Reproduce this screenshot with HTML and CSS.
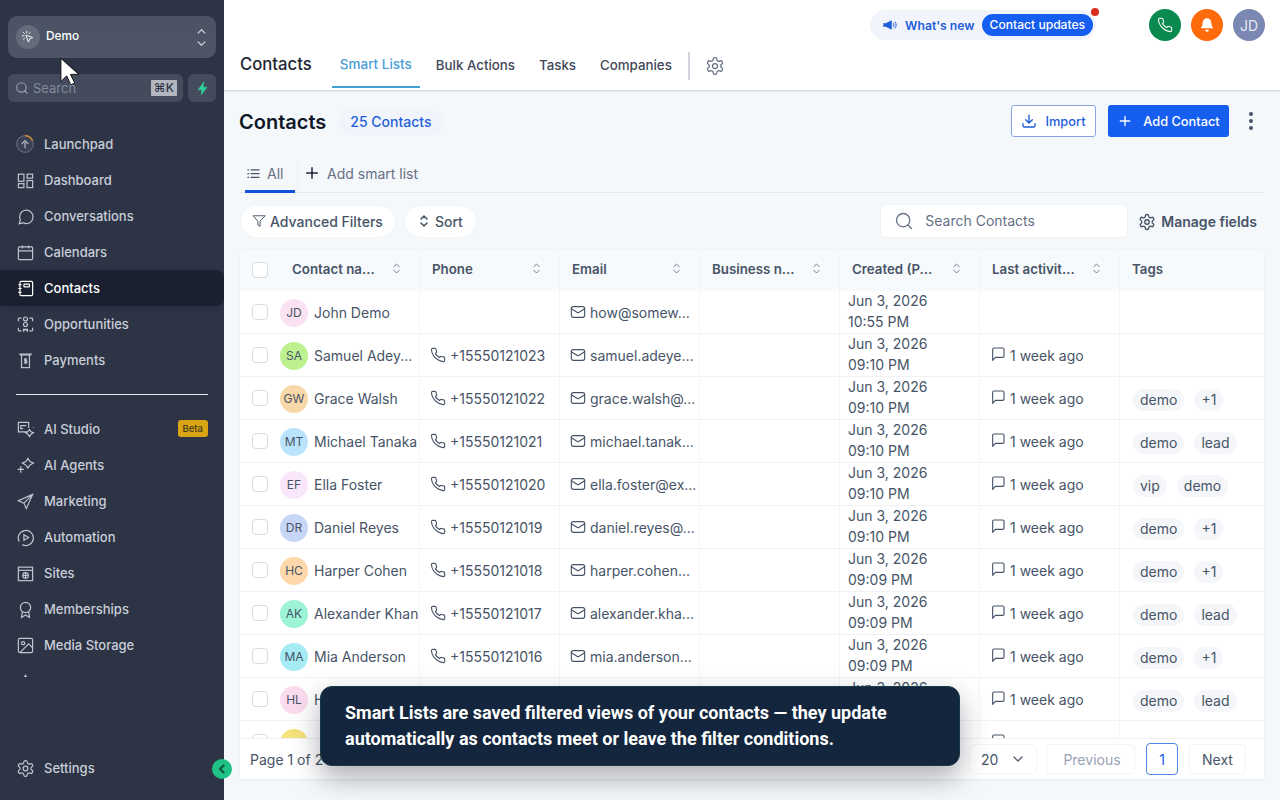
FILE: index.html
```html
<!DOCTYPE html>
<html lang="en">
<head>
<meta charset="utf-8">
<title>Contacts</title>
<link rel="stylesheet" href="styles.css">
</head>
<body>
<svg class="sprite" aria-hidden="true">
  <symbol id="i-phone" viewBox="0 0 24 24"><path d="M22 16.92v3a2 2 0 0 1-2.18 2 19.79 19.79 0 0 1-8.63-3.07 19.5 19.5 0 0 1-6-6 19.79 19.79 0 0 1-3.07-8.67A2 2 0 0 1 4.11 2h3a2 2 0 0 1 2 1.72 12.84 12.84 0 0 0 .7 2.81 2 2 0 0 1-.45 2.11L8.09 9.91a16 16 0 0 0 6 6l1.27-1.27a2 2 0 0 1 2.11-.45 12.84 12.84 0 0 0 2.81.7A2 2 0 0 1 22 16.92z"/></symbol>
  <symbol id="i-mail" viewBox="0 0 24 24"><rect x="2" y="4" width="20" height="16" rx="3"/><path d="m22 7-8.97 5.7a1.94 1.94 0 0 1-2.06 0L2 7"/></symbol>
  <symbol id="i-msg" viewBox="0 0 24 24"><path d="M21 15a2 2 0 0 1-2 2H8l-4 4.5V5a2 2 0 0 1 2-2h13a2 2 0 0 1 2 2z"/></symbol>
  <symbol id="i-gear" viewBox="0 0 24 24"><path d="M12.22 2h-.44a2 2 0 0 0-2 2v.18a2 2 0 0 1-1 1.73l-.43.25a2 2 0 0 1-2 0l-.15-.08a2 2 0 0 0-2.73.73l-.22.38a2 2 0 0 0 .73 2.73l.15.1a2 2 0 0 1 1 1.72v.51a2 2 0 0 1-1 1.74l-.15.09a2 2 0 0 0-.73 2.73l.22.38a2 2 0 0 0 2.73.73l.15-.08a2 2 0 0 1 2 0l.43.25a2 2 0 0 1 1 1.73V20a2 2 0 0 0 2 2h.44a2 2 0 0 0 2-2v-.18a2 2 0 0 1 1-1.73l.43-.25a2 2 0 0 1 2 0l.15.08a2 2 0 0 0 2.73-.73l.22-.39a2 2 0 0 0-.73-2.73l-.15-.08a2 2 0 0 1-1-1.74v-.5a2 2 0 0 1 1-1.74l.15-.09a2 2 0 0 0 .73-2.73l-.22-.38a2 2 0 0 0-2.73-.73l-.15.08a2 2 0 0 1-2 0l-.43-.25a2 2 0 0 1-1-1.73V4a2 2 0 0 0-2-2z"/><circle cx="12" cy="12" r="3"/></symbol>
  <symbol id="i-sort" viewBox="0 0 10 14"><path d="M2 5l3-3 3 3M2 9l3 3 3-3"/></symbol>
  <symbol id="i-search" viewBox="0 0 24 24"><circle cx="11" cy="11" r="8"/><path d="m21 21-4.3-4.3"/></symbol>
</svg>

<div class="app">
  <aside class="sidebar">
    <div class="switcher">
      <span class="sw-logo"><svg class="ico-14" viewBox="0 0 24 24"><path d="M9 9l11 4-5 2-2 5z"/><path d="M4 4l2 2M10 2v3M2 10h3M4 16l2-2M16 4l-2 2"/></svg></span>
      <span class="sw-name">Demo</span>
      <svg class="sw-caret" viewBox="0 0 12 22"><path d="M2 6l4-4 4 4M2 16l4 4 4-4"/></svg>
    </div>
    <div class="search-row">
      <div class="side-search">
        <svg class="ico-side-search"><use href="#i-search"/></svg>
        <span class="side-search-text">Search</span>
        <kbd class="kbd">⌘K</kbd>
      </div>
      <button class="bolt" type="button"><svg viewBox="0 0 24 24" class="bolt-ico"><path d="M14 2 5 14h6l-1 8 9-12h-6z"/></svg></button>
    </div>
    <nav class="side-nav">
      <a class="nav-item"><svg class="nav-ico launch" viewBox="0 0 24 24"><circle cx="12" cy="12" r="10"/><path class="launch-arc" d="M12 2a10 10 0 0 1 9 6"/><path d="M12 17v-7M8 12l4-4 4 4"/></svg><span class="lbl">Launchpad</span></a>
      <a class="nav-item"><svg class="nav-ico" viewBox="0 0 24 24"><rect x="3" y="4" width="7" height="9"/><rect x="14" y="4" width="7" height="5"/><rect x="3" y="16" width="7" height="5"/><rect x="14" y="12" width="7" height="9"/></svg><span class="lbl">Dashboard</span></a>
      <a class="nav-item"><svg class="nav-ico" viewBox="0 0 24 24"><path d="M4 21l1.5-4.5A8.5 8.5 0 1 1 9 20z"/></svg><span class="lbl">Conversations</span></a>
      <a class="nav-item"><svg class="nav-ico" viewBox="0 0 24 24"><rect x="3" y="5" width="18" height="16" rx="1.5"/><path d="M3 10h18M8 3v4M16 3v4"/></svg><span class="lbl">Calendars</span></a>
      <a class="nav-item active"><svg class="nav-ico" viewBox="0 0 24 24"><rect x="5" y="3" width="16" height="18" rx="1.5"/><rect x="10" y="6.5" width="7" height="3.5" rx=".8"/><path d="M3 7h4M3 12h4M3 17h4"/></svg><span class="lbl">Contacts</span></a>
      <a class="nav-item"><svg class="nav-ico" viewBox="0 0 24 24"><circle cx="12" cy="5" r="2.5"/><circle cx="12" cy="12" r="2.5"/><path d="M9.500 21a2.500 2.500 0 0 1 5 0v-3h-5zM3 4h4M3 4v4M21 4h-4M21 4v4M3 20h4M3 20v-4M21 20h-4M21 20v-4"/></svg><span class="lbl">Opportunities</span></a>
      <a class="nav-item"><svg class="nav-ico" viewBox="0 0 24 24"><path d="M4 4h16M6 4v2M18 4v2"/><rect x="7" y="5" width="10" height="16"/><path d="M14 10h-3v2.500h2.500V15H10M12 9v7"/></svg><span class="lbl">Payments</span></a>
      <hr class="side-divider">
      <a class="nav-item"><svg class="nav-ico" viewBox="0 0 24 24"><path d="M14 15H3V3h13v7M6 7h7M6 7v4h3"/><path d="M17 12l2 3 3 1-3 2-2 3-2-3-3-2 3-1zM22 9v1"/></svg><span class="lbl">AI Studio</span><span class="beta">Beta</span></a>
      <a class="nav-item"><svg class="nav-ico" viewBox="0 0 24 24"><path d="M15 3l2.500 4 4.500 2-4.500 2.500L15 15l-2.500-3.500L8 9l4.500-2zM6 13v8M2 17h8"/></svg><span class="lbl">AI Agents</span></a>
      <a class="nav-item"><svg class="nav-ico" viewBox="0 0 24 24"><path d="M21 3 3 11l7 3 3 7zM10 14l11-11"/></svg><span class="lbl">Marketing</span></a>
      <a class="nav-item"><svg class="nav-ico" viewBox="0 0 24 24"><path d="M4 17a9.500 9.500 0 1 1 4 4M3 12a9 9 0 0 0 1 5"/><path d="M10 8.500v7l6-3.500z"/></svg><span class="lbl">Automation</span></a>
      <a class="nav-item"><svg class="nav-ico" viewBox="0 0 24 24"><rect x="3" y="4" width="18" height="17"/><path d="M3 8h18"/><circle cx="12" cy="14.500" r="3.500"/><path d="M8.500 14.500h7M12 11v7"/></svg><span class="lbl">Sites</span></a>
      <a class="nav-item"><svg class="nav-ico" viewBox="0 0 24 24"><circle cx="12" cy="9.500" r="6.500"/><path d="M8 15l-1 7 5-3 5 3-1-7"/></svg><span class="lbl">Memberships</span></a>
      <a class="nav-item"><svg class="nav-ico" viewBox="0 0 24 24"><rect x="3" y="3" width="18" height="18" rx="2"/><circle cx="9" cy="9" r="2"/><path d="m21 15-5-5L5 21"/></svg><span class="lbl">Media Storage</span></a>
      <a class="nav-item"><svg class="nav-ico" viewBox="0 0 24 24"><path class="tri" d="M12 2.500l2 4h-4z"/></svg></a>
    </nav>
    <div class="side-foot">
      <a class="nav-item"><svg class="nav-ico"><use href="#i-gear"/></svg><span class="lbl">Settings</span></a>
      <button class="collapse" type="button"><svg viewBox="0 0 12 12" class="collapse-ico"><path d="M7.500 2.500 4 6l3.500 3.500"/></svg></button>
    </div>
  </aside>

  <main class="main">
    <header class="topbar">
      <div class="top-row">
        <div class="news">
          <svg class="news-ico" viewBox="0 0 20 16"><path d="M1 6h3l8-4v12l-8-4H1z"/><path class="news-wave" d="M14.500 5.500a3 3 0 0 1 0 5M17 3.500a6 6 0 0 1 0 9"/></svg>
          <span class="news-label">What's new</span>
          <span class="news-pill">Contact updates</span>
          <span class="news-dot"></span>
        </div>
        <div class="top-icons">
          <span class="round green"><svg class="ico-16"><use href="#i-phone"/></svg></span>
          <span class="round orange"><svg class="bell" viewBox="0 0 24 24"><path d="M12 2a6.500 6.500 0 0 0-6.500 6.500c0 5-2.500 7-2.500 8.500h18c0-1.500-2.500-3.500-2.500-8.500A6.500 6.500 0 0 0 12 2z"/><path d="M9 19h6a3 3 0 0 1-6 0z"/></svg></span>
          <span class="round slate">JD</span>
        </div>
      </div>
      <div class="tab-row">
        <span class="brand">Contacts</span>
        <a class="top-tab current">Smart Lists</a>
        <a class="top-tab">Bulk Actions</a>
        <a class="top-tab">Tasks</a>
        <a class="top-tab">Companies</a>
        <span class="tab-sep"></span>
        <svg class="tab-gear"><use href="#i-gear"/></svg>
      </div>
    </header>

    <section class="content">
      <div class="title-row">
        <h1 class="title">Contacts</h1>
        <span class="count">25 Contacts</span>
        <span class="spacer"></span>
        <button class="btn outline" type="button"><svg class="ico-16" viewBox="0 0 24 24"><path d="M12 3v12M7 10l5 5 5-5M3 16v3a2 2 0 0 0 2 2h14a2 2 0 0 0 2-2v-3"/></svg>Import</button>
        <button class="btn solid" type="button"><svg class="ico-16" viewBox="0 0 24 24"><path d="M12 5v14M5 12h14"/></svg>Add Contact</button>
        <span class="dots"><i></i><i></i><i></i></span>
      </div>

      <div class="list-tabs">
        <a class="list-tab on"><svg class="ico-16" viewBox="0 0 24 24"><path d="M8 6h13M8 12h13M8 18h13M3 6h1M3 12h1M3 18h1"/></svg>All</a>
        <a class="list-tab add"><svg class="plus" viewBox="0 0 24 24"><path d="M12 5v14M5 12h14"/></svg>Add smart list</a>
      </div>

      <div class="filter-row">
        <button class="pill" type="button"><svg class="ico-14" viewBox="0 0 24 24"><path d="M22 3H2l8 9.500V19l4 2v-8.500z"/></svg>Advanced Filters</button>
        <button class="pill sort-pill" type="button"><svg class="ico-sort-pill"><use href="#i-sort"/></svg>Sort</button>
        <span class="spacer"></span>
        <div class="search"><svg class="ico-20"><use href="#i-search"/></svg><span>Search Contacts</span></div>
        <a class="manage"><svg class="ico-18"><use href="#i-gear"/></svg>Manage fields</a>
      </div>

      <div class="table">
        <div class="row head">
          <div class="cell check"><span class="box"></span></div>
          <div class="cell name-h">Contact na...<svg class="sort"><use href="#i-sort"/></svg></div>
          <div class="cell">Phone<svg class="sort"><use href="#i-sort"/></svg></div>
          <div class="cell">Email<svg class="sort"><use href="#i-sort"/></svg></div>
          <div class="cell">Business n...<svg class="sort"><use href="#i-sort"/></svg></div>
          <div class="cell">Created (P...<svg class="sort"><use href="#i-sort"/></svg></div>
          <div class="cell">Last activit...<svg class="sort"><use href="#i-sort"/></svg></div>
          <div class="cell">Tags</div>
        </div>
        <div class="body">
          <div class="row">
            <div class="cell check"><span class="box"></span></div>
            <div class="cell who"><span class="av pink">JD</span><span class="nm">John Demo</span></div>
            <div class="cell"></div>
            <div class="cell mail"><svg class="ci"><use href="#i-mail"/></svg>how@somew...</div>
            <div class="cell"></div>
            <div class="cell date">Jun 3, 2026<br>10:55 PM</div>
            <div class="cell"></div>
            <div class="cell"></div>
          </div>
          <div class="row">
            <div class="cell check"><span class="box"></span></div>
            <div class="cell who"><span class="av lime">SA</span><span class="nm">Samuel Adey...</span></div>
            <div class="cell tel"><svg class="ci"><use href="#i-phone"/></svg>+15550121023</div>
            <div class="cell mail"><svg class="ci"><use href="#i-mail"/></svg>samuel.adeye...</div>
            <div class="cell"></div>
            <div class="cell date">Jun 3, 2026<br>09:10 PM</div>
            <div class="cell act"><svg class="ci"><use href="#i-msg"/></svg>1 week ago</div>
            <div class="cell"></div>
          </div>
          <div class="row">
            <div class="cell check"><span class="box"></span></div>
            <div class="cell who"><span class="av sand">GW</span><span class="nm">Grace Walsh</span></div>
            <div class="cell tel"><svg class="ci"><use href="#i-phone"/></svg>+15550121022</div>
            <div class="cell mail"><svg class="ci"><use href="#i-mail"/></svg>grace.walsh@...</div>
            <div class="cell"></div>
            <div class="cell date">Jun 3, 2026<br>09:10 PM</div>
            <div class="cell act"><svg class="ci"><use href="#i-msg"/></svg>1 week ago</div>
            <div class="cell tags"><span class="tag">demo</span><span class="tag">+1</span></div>
          </div>
          <div class="row">
            <div class="cell check"><span class="box"></span></div>
            <div class="cell who"><span class="av sky">MT</span><span class="nm">Michael Tanaka</span></div>
            <div class="cell tel"><svg class="ci"><use href="#i-phone"/></svg>+15550121021</div>
            <div class="cell mail"><svg class="ci"><use href="#i-mail"/></svg>michael.tanak...</div>
            <div class="cell"></div>
            <div class="cell date">Jun 3, 2026<br>09:10 PM</div>
            <div class="cell act"><svg class="ci"><use href="#i-msg"/></svg>1 week ago</div>
            <div class="cell tags"><span class="tag">demo</span><span class="tag">lead</span></div>
          </div>
          <div class="row">
            <div class="cell check"><span class="box"></span></div>
            <div class="cell who"><span class="av lilac">EF</span><span class="nm">Ella Foster</span></div>
            <div class="cell tel"><svg class="ci"><use href="#i-phone"/></svg>+15550121020</div>
            <div class="cell mail"><svg class="ci"><use href="#i-mail"/></svg>ella.foster@ex...</div>
            <div class="cell"></div>
            <div class="cell date">Jun 3, 2026<br>09:10 PM</div>
            <div class="cell act"><svg class="ci"><use href="#i-msg"/></svg>1 week ago</div>
            <div class="cell tags"><span class="tag">vip</span><span class="tag">demo</span></div>
          </div>
          <div class="row">
            <div class="cell check"><span class="box"></span></div>
            <div class="cell who"><span class="av indigo">DR</span><span class="nm">Daniel Reyes</span></div>
            <div class="cell tel"><svg class="ci"><use href="#i-phone"/></svg>+15550121019</div>
            <div class="cell mail"><svg class="ci"><use href="#i-mail"/></svg>daniel.reyes@...</div>
            <div class="cell"></div>
            <div class="cell date">Jun 3, 2026<br>09:10 PM</div>
            <div class="cell act"><svg class="ci"><use href="#i-msg"/></svg>1 week ago</div>
            <div class="cell tags"><span class="tag">demo</span><span class="tag">+1</span></div>
          </div>
          <div class="row">
            <div class="cell check"><span class="box"></span></div>
            <div class="cell who"><span class="av peach">HC</span><span class="nm">Harper Cohen</span></div>
            <div class="cell tel"><svg class="ci"><use href="#i-phone"/></svg>+15550121018</div>
            <div class="cell mail"><svg class="ci"><use href="#i-mail"/></svg>harper.cohen...</div>
            <div class="cell"></div>
            <div class="cell date">Jun 3, 2026<br>09:09 PM</div>
            <div class="cell act"><svg class="ci"><use href="#i-msg"/></svg>1 week ago</div>
            <div class="cell tags"><span class="tag">demo</span><span class="tag">+1</span></div>
          </div>
          <div class="row">
            <div class="cell check"><span class="box"></span></div>
            <div class="cell who"><span class="av mint">AK</span><span class="nm">Alexander Khan</span></div>
            <div class="cell tel"><svg class="ci"><use href="#i-phone"/></svg>+15550121017</div>
            <div class="cell mail"><svg class="ci"><use href="#i-mail"/></svg>alexander.kha...</div>
            <div class="cell"></div>
            <div class="cell date">Jun 3, 2026<br>09:09 PM</div>
            <div class="cell act"><svg class="ci"><use href="#i-msg"/></svg>1 week ago</div>
            <div class="cell tags"><span class="tag">demo</span><span class="tag">lead</span></div>
          </div>
          <div class="row">
            <div class="cell check"><span class="box"></span></div>
            <div class="cell who"><span class="av aqua">MA</span><span class="nm">Mia Anderson</span></div>
            <div class="cell tel"><svg class="ci"><use href="#i-phone"/></svg>+15550121016</div>
            <div class="cell mail"><svg class="ci"><use href="#i-mail"/></svg>mia.anderson...</div>
            <div class="cell"></div>
            <div class="cell date">Jun 3, 2026<br>09:09 PM</div>
            <div class="cell act"><svg class="ci"><use href="#i-msg"/></svg>1 week ago</div>
            <div class="cell tags"><span class="tag">demo</span><span class="tag">+1</span></div>
          </div>
          <div class="row">
            <div class="cell check"><span class="box"></span></div>
            <div class="cell who"><span class="av rose">HL</span><span class="nm">H</span></div>
            <div class="cell tel"></div>
            <div class="cell mail"></div>
            <div class="cell"></div>
            <div class="cell date">Jun 3, 2026<br>09:09 PM</div>
            <div class="cell act"><svg class="ci"><use href="#i-msg"/></svg>1 week ago</div>
            <div class="cell tags"><span class="tag">demo</span><span class="tag">lead</span></div>
          </div>
          <div class="row">
            <div class="cell check"><span class="box"></span></div>
            <div class="cell who"><span class="av yellow"></span></div>
            <div class="cell"></div>
            <div class="cell"></div>
            <div class="cell"></div>
            <div class="cell"></div>
            <div class="cell act"><svg class="ci"><use href="#i-msg"/></svg></div>
            <div class="cell"></div>
          </div>
        </div>
        <div class="pager">
          <span class="page-text">Page 1 of 2</span>
          <span class="spacer"></span>
          <button class="size" type="button">20<svg class="chev" viewBox="0 0 24 24"><path d="m6 9 6 6 6-6"/></svg></button>
          <button class="pg off" type="button">Previous</button>
          <button class="pg num" type="button">1</button>
          <button class="pg" type="button">Next</button>
        </div>
      </div>
    </section>
  </main>
</div>

<div class="caption">Smart Lists are saved filtered views of your contacts — they update automatically as contacts meet or leave the filter conditions.</div>
<svg class="cursor" viewBox="0 0 22 30"><path d="M2 1v24l6-6 4.500 9.500 4-2-4.500-9h8.500z"/></svg>
</body>
</html>
```
FILE: styles.css
```css
* { box-sizing: border-box; }
html, body { margin: 0; height: 100%; overflow: hidden; }
body { font-family: Inter, "Liberation Sans", sans-serif; background: #f5f8fb; color: #475467; font-size: 14px; }
.sprite { display: none; }
svg { fill: none; stroke: currentColor; stroke-width: 2; stroke-linecap: round; stroke-linejoin: round; flex: none; }
button { font-family: inherit; }
.spacer { flex: 1; }
.ico-14 { width: 14px; height: 14px; }
.ico-16 { width: 16px; height: 16px; }
.ico-18 { width: 18px; height: 18px; }
.ico-20 { width: 20px; height: 20px; stroke-width: 1.6; }

.app { display: flex; height: 800px; }

/* sidebar */
.sidebar { width: 224px; flex: none; background: #2d3446; display: flex; flex-direction: column; padding-top: 16px; position: relative; color: #c9ced8; }
.switcher { margin: 0 8px; height: 42px; border-radius: 9px; background: linear-gradient(180deg, #4a5263, #4d5566); display: flex; align-items: center; padding: 0 9px 0 8px; gap: 6px; }
.sw-logo { width: 24px; height: 24px; border-radius: 50%; background: #646b7a; display: flex; align-items: center; justify-content: center; color: #fff; }
.sw-logo svg { stroke-width: 1.6; }
.sw-name { color: #fff; font-size: 11.8px; font-weight: 500; flex: 1; padding-bottom: 3px; }
.sw-caret { width: 11px; height: 19px; color: #c9ced8; stroke-width: 1.4; }
.search-row { display: flex; gap: 5px; margin: 16px 8px 0; }
.side-search { flex: 1; height: 28px; border-radius: 6px; background: #434b5c; display: flex; align-items: center; padding: 0 6px 0 7px; gap: 4px; }
.ico-side-search { width: 14px; height: 14px; color: #97a0ae; }
.side-search-text { flex: 1; color: #828b9b; font-size: 13px; padding-bottom: 1px; }
.kbd { background: #b2b7bf; color: #2d3446; font: 500 12px/16px Inter, sans-serif; padding: 0 3px; border-radius: 1px; }
.bolt { width: 28px; height: 28px; border: 0; border-radius: 6px; background: #434b5c; padding: 0; display: flex; align-items: center; justify-content: center; }
.bolt-ico { width: 15px; height: 15px; fill: #2fd39a; stroke: #2fd39a; stroke-width: 1; }
.side-nav { flex: 1; margin-top: 24px; overflow: hidden; min-height: 0; }
.nav-item { height: 36px; display: flex; align-items: center; padding-left: 16px; gap: 9px; font-size: 13px; font-weight: 500; color: #c9ced8; position: relative; }
.nav-ico { width: 19px; height: 19px; stroke-width: 1.5; color: #c0c5cf; stroke-linecap: butt; stroke-linejoin: miter; }
.launch { width: 20px; height: 20px; margin-left: -1px; color: #5d6577; }
.launch circle { fill: #3a4154; }
.launch path { stroke: #aeb4bf; }
.launch .launch-arc { stroke: #c8813f; stroke-width: 2; }
.nav-item .tri { fill: #c9ced8; stroke: none; }
.nav-item.active { background: #1a2030; color: #fff; border-radius: 0 8px 8px 0; box-shadow: 0 2px 6px rgba(0,0,0,.12); }
.nav-item.active .nav-ico { color: #fff; }
.side-divider { margin: 16px 16px 16px; border: 0; height: 1px; background: #e4e7ee; }
.beta { position: absolute; right: 16px; top: 9px; background: #d9a514; color: #3f3a1a; font-size: 9.5px; font-weight: 500; line-height: 17px; padding: 0 5px; border-radius: 3px; }
.side-foot { height: 123px; flex: none; padding-top: 73px; position: relative; }
.collapse { position: absolute; right: -8px; top: 82px; width: 20px; height: 20px; border: 0; border-radius: 50%; background: #21c285; padding: 0; display: flex; align-items: center; justify-content: center; z-index: 3; }
.collapse-ico { width: 12px; height: 12px; color: #0d5a3f; stroke-width: 2.4; }

/* main */
.main { flex: 1; min-width: 0; display: flex; flex-direction: column; }
.topbar { height: 90px; background: #fff; box-shadow: 0 1px 2px rgba(16,24,40,.18); position: relative; padding: 10px 15px 0 16px; }
.top-row { display: flex; justify-content: flex-end; align-items: center; height: 30px; }
.news { position: relative; height: 30px; width: 226px; border-radius: 15px; background: #f1f5fb; display: flex; align-items: center; padding: 0 3px 0 13px; margin-right: 53px; }
.news-ico { width: 14px; height: 12px; fill: #1f5ed8; stroke: #1f5ed8; stroke-width: 1; flex: none; }
.news-wave { fill: none; stroke-width: 1.4; }
.news-label { font-size: 12.2px; font-weight: 600; color: #1f5ed8; margin: 0 7px 0 8px; white-space: nowrap; }
.news-pill { background: #155eef; color: #fff; font-size: 12.1px; font-weight: 500; height: 22px; line-height: 22px; padding: 0 8px; border-radius: 11px; white-space: nowrap; }
.news-dot { position: absolute; top: -2px; right: -3px; width: 8px; height: 8px; border-radius: 50%; background: #d92d20; }
.top-icons { display: flex; gap: 10px; }
.round { width: 32px; height: 32px; border-radius: 50%; color: #fff; display: flex; align-items: center; justify-content: center; font-size: 14px; }
.green { background: #0a8a4e; }
.green svg { stroke-width: 1.6; }
.orange { background: #ff6a0a; }
.bell { width: 16px; height: 16px; fill: #fff; stroke: none; }
.slate { background: #7a88b3; color: #e6e9f2; }
.tab-row { display: flex; align-items: stretch; height: 50px; margin-top: 0; }
.brand { font-size: 16.7px; font-weight: 500; color: #1d2433; line-height: 48px; margin-right: 20px; }
.top-tab { padding: 0 8px; margin-right: 8px; font-size: 13.3px; font-weight: 500; color: #3f4859; line-height: 50px; white-space: nowrap; }
.top-tab.current { color: #4a9ed6; font-size: 13.5px; line-height: 48px; border-bottom: 2px solid #42a0d6; height: 48px; margin-right: 8px; }
.tab-sep { width: 2px; height: 28px; margin: 12px 0 0 0; background: #d0d5dd; }
.tab-gear { width: 20px; height: 20px; margin: 16px 0 0 15px; color: #667085; stroke-width: 1.5; }

.content { flex: 1; min-height: 0; padding: 0 16px 20px; display: flex; flex-direction: column; }
.title-row { display: flex; align-items: center; height: 32px; margin-top: 15px; }
.title { margin: 2px 12px 0 -1px; font-size: 20px; font-weight: 600; color: #101828; }
.count { margin-top: 2px; height: 26px; line-height: 26px; padding: 0 12px; border-radius: 13px; background: #f1f5fb; color: #1f5ed8; font-size: 14px; font-weight: 500; }
.btn { height: 32px; border-radius: 3px; font-size: 12.8px; font-weight: 500; display: flex; align-items: center; padding: 0; }
.btn.outline { width: 85px; background: #fff; border: 1px solid #8aa5e6; color: #1f5ed8; justify-content: center; gap: 8px; margin-right: 12px; }
.btn.solid { width: 121px; background: #155eef; border: 0; color: #fff; justify-content: center; gap: 10px; margin-right: 20px; }
.dots { width: 4px; display: flex; flex-direction: column; gap: 3px; margin-right: 11px; }
.dots i { width: 4px; height: 4px; border-radius: 50%; background: #475467; display: block; }
.list-tabs { display: flex; height: 32px; margin-top: 24px; border-bottom: 1px solid #e4e7ec; }
.list-tab { display: flex; align-items: center; height: 32px; color: #667085; font-size: 14px; white-space: nowrap; }
.list-tab.on { margin-left: 5px; width: 50px; padding: 0 0 4px 1px; gap: 6px; border-bottom: 3px solid #1550d8; }
.list-tab.on svg { width: 15px; height: 15px; color: #475467; }
.list-tab.add { margin-left: 2px; padding: 0 0 8px 6px; gap: 6px; position: relative; }
.list-tab.add::before { content: ""; position: absolute; left: 0; top: 0; height: 30px; width: 1px; background: #eef1f5; }
.plus { width: 18px; height: 18px; color: #1d2433; stroke-width: 2; }
.filter-row { display: flex; align-items: center; margin-top: 11px; height: 34px; }
.pill { height: 31px; border: 0; background: #fff; border-radius: 16px; display: flex; align-items: center; gap: 4px; font-size: 14px; font-weight: 500; color: #475467; padding: 0 12px 0 11px; margin-right: 10px; box-shadow: 0 0 1px rgba(16,24,40,.1); white-space: nowrap; }
.pill:first-child { margin-left: 1px; }
.pill.sort-pill { padding: 0 13px 0 14px; gap: 6px; }
.pill svg { color: #475467; stroke-width: 1.6; }
.ico-sort-pill { width: 10px; height: 14px; }
.search { width: 248px; height: 34px; background: #fff; border-radius: 5px; display: flex; align-items: center; gap: 11px; padding: 0 0 1px 13px; border: 1px solid #f0f2f5; color: #667085; }
.search svg { color: #667085; }
.manage { display: flex; align-items: center; gap: 5px; font-size: 14px; font-weight: 600; color: #475467; margin: 1px 7px 0 10px; white-space: nowrap; }
.manage svg { stroke-width: 1.8; }

.table { margin-top: 12px; flex: 1; min-height: 0; display: flex; flex-direction: column; box-shadow: 0 0 0 1px #eef1f5; border-radius: 8px 8px 0 0; background: #fff; width: 1024px; overflow: hidden; }
.row { display: grid; grid-template-columns: 40px 140px 140px 140px 140px 140px 140px 1fr; grid-template-rows: 42px; height: 43px; border-bottom: 1px solid #f0f2f5; flex: none; }
.row.head { height: 41px; grid-template-rows: 41px; background: #f7fafc; border-bottom: 0; font-size: 13.3px; font-weight: 600; color: #475467; }
.cell { display: flex; align-items: center; padding-left: 10px; border-right: 1px solid #f2f4f7; white-space: nowrap; position: relative; min-width: 0; }
.head .cell { padding: 0 0 3px 12px; }
.cell:last-child { border-right: 0; }
.cell.check, .head .cell.check { padding: 0; justify-content: center; border-right: 0; }
.row .cell.who { padding-left: 0; border-right: 1px solid #f2f4f7; }
.box { width: 16px; height: 16px; border: 1px solid #d8dce3; border-radius: 4px; background: #fff; }
.head .box { margin-bottom: 2px; }
.sort { position: absolute; right: 18px; top: 12px; width: 9px; height: 13px; color: #667085; stroke-width: 1; }
.body { flex: 1; min-height: 0; overflow: hidden; }
.av { width: 28px; height: 28px; border-radius: 50%; display: flex; align-items: center; justify-content: center; font-size: 12px; color: #475467; flex: none; margin: 1px 6px 0 0; }
.nm { color: #475467; font-size: 14px; }
.pink { background: #fbe2f2; } .lime { background: #bdf08f; } .sand { background: #f8d8a8; }
.sky { background: #bae4fb; } .lilac { background: #f9e6fb; } .indigo { background: #c7d5f7; }
.peach { background: #fed7aa; } .mint { background: #9df3d6; } .aqua { background: #a5ecf5; }
.rose { background: #fbdcee; } .yellow { background: #f6e27a; }
.ci { width: 16px; height: 16px; color: #475467; stroke-width: 1.7; margin-right: 4px; }
.act .ci { margin: 0 4px 2px 0; }
.date { line-height: 21px; padding: 0 0 2px 8px; color: #475467; }
.tags { gap: 10px; padding: 4px 0 0 13px; }
.tag { height: 22px; line-height: 22px; padding: 0 7px; background: #f4f6f9; border-radius: 11px; color: #475467; }
.pager { height: 42px; flex: none; display: flex; align-items: center; padding: 0 18px 0 10px; background: #fff; border-top: 1px solid #eef1f5; border-bottom: 1px solid #e9edf2; }
.page-text { color: #475467; font-size: 14px; }
.size { width: 68px; height: 30px; background: #fff; border: 1px solid #f2f4f7; border-radius: 6px; display: flex; align-items: center; justify-content: space-between; padding: 0 10px 0 11px; font-size: 14px; color: #475467; margin-right: 9px; }
.chev { width: 16px; height: 16px; stroke-width: 1.8; }
.pg { height: 30px; background: #fff; border: 1px solid #f2f4f7; border-radius: 4px; font-size: 14px; color: #475467; padding: 0; margin-right: 11px; }
.pg.off { color: #98a2b3; width: 89px; padding-left: 3px; }
.pg.num { width: 32px; height: 32px; border-color: #4a86e8; color: #155eef; }
.pg:last-child { margin-right: 0; width: 57px; }

/* overlays */
.caption { position: absolute; left: 320px; top: 686px; width: 640px; height: 80px; background: #14263d; border: 1px solid #173a44; border-radius: 12px; padding: 13px 24px; color: #fff; font: 700 18px/26px Roboto, sans-serif; box-shadow: 0 12px 28px rgba(16,24,40,.35); z-index: 5; }
.cursor { position: absolute; left: 59px; top: 57px; width: 21px; height: 30px; fill: #fff; stroke: #111; stroke-width: 1; z-index: 6; }
```
